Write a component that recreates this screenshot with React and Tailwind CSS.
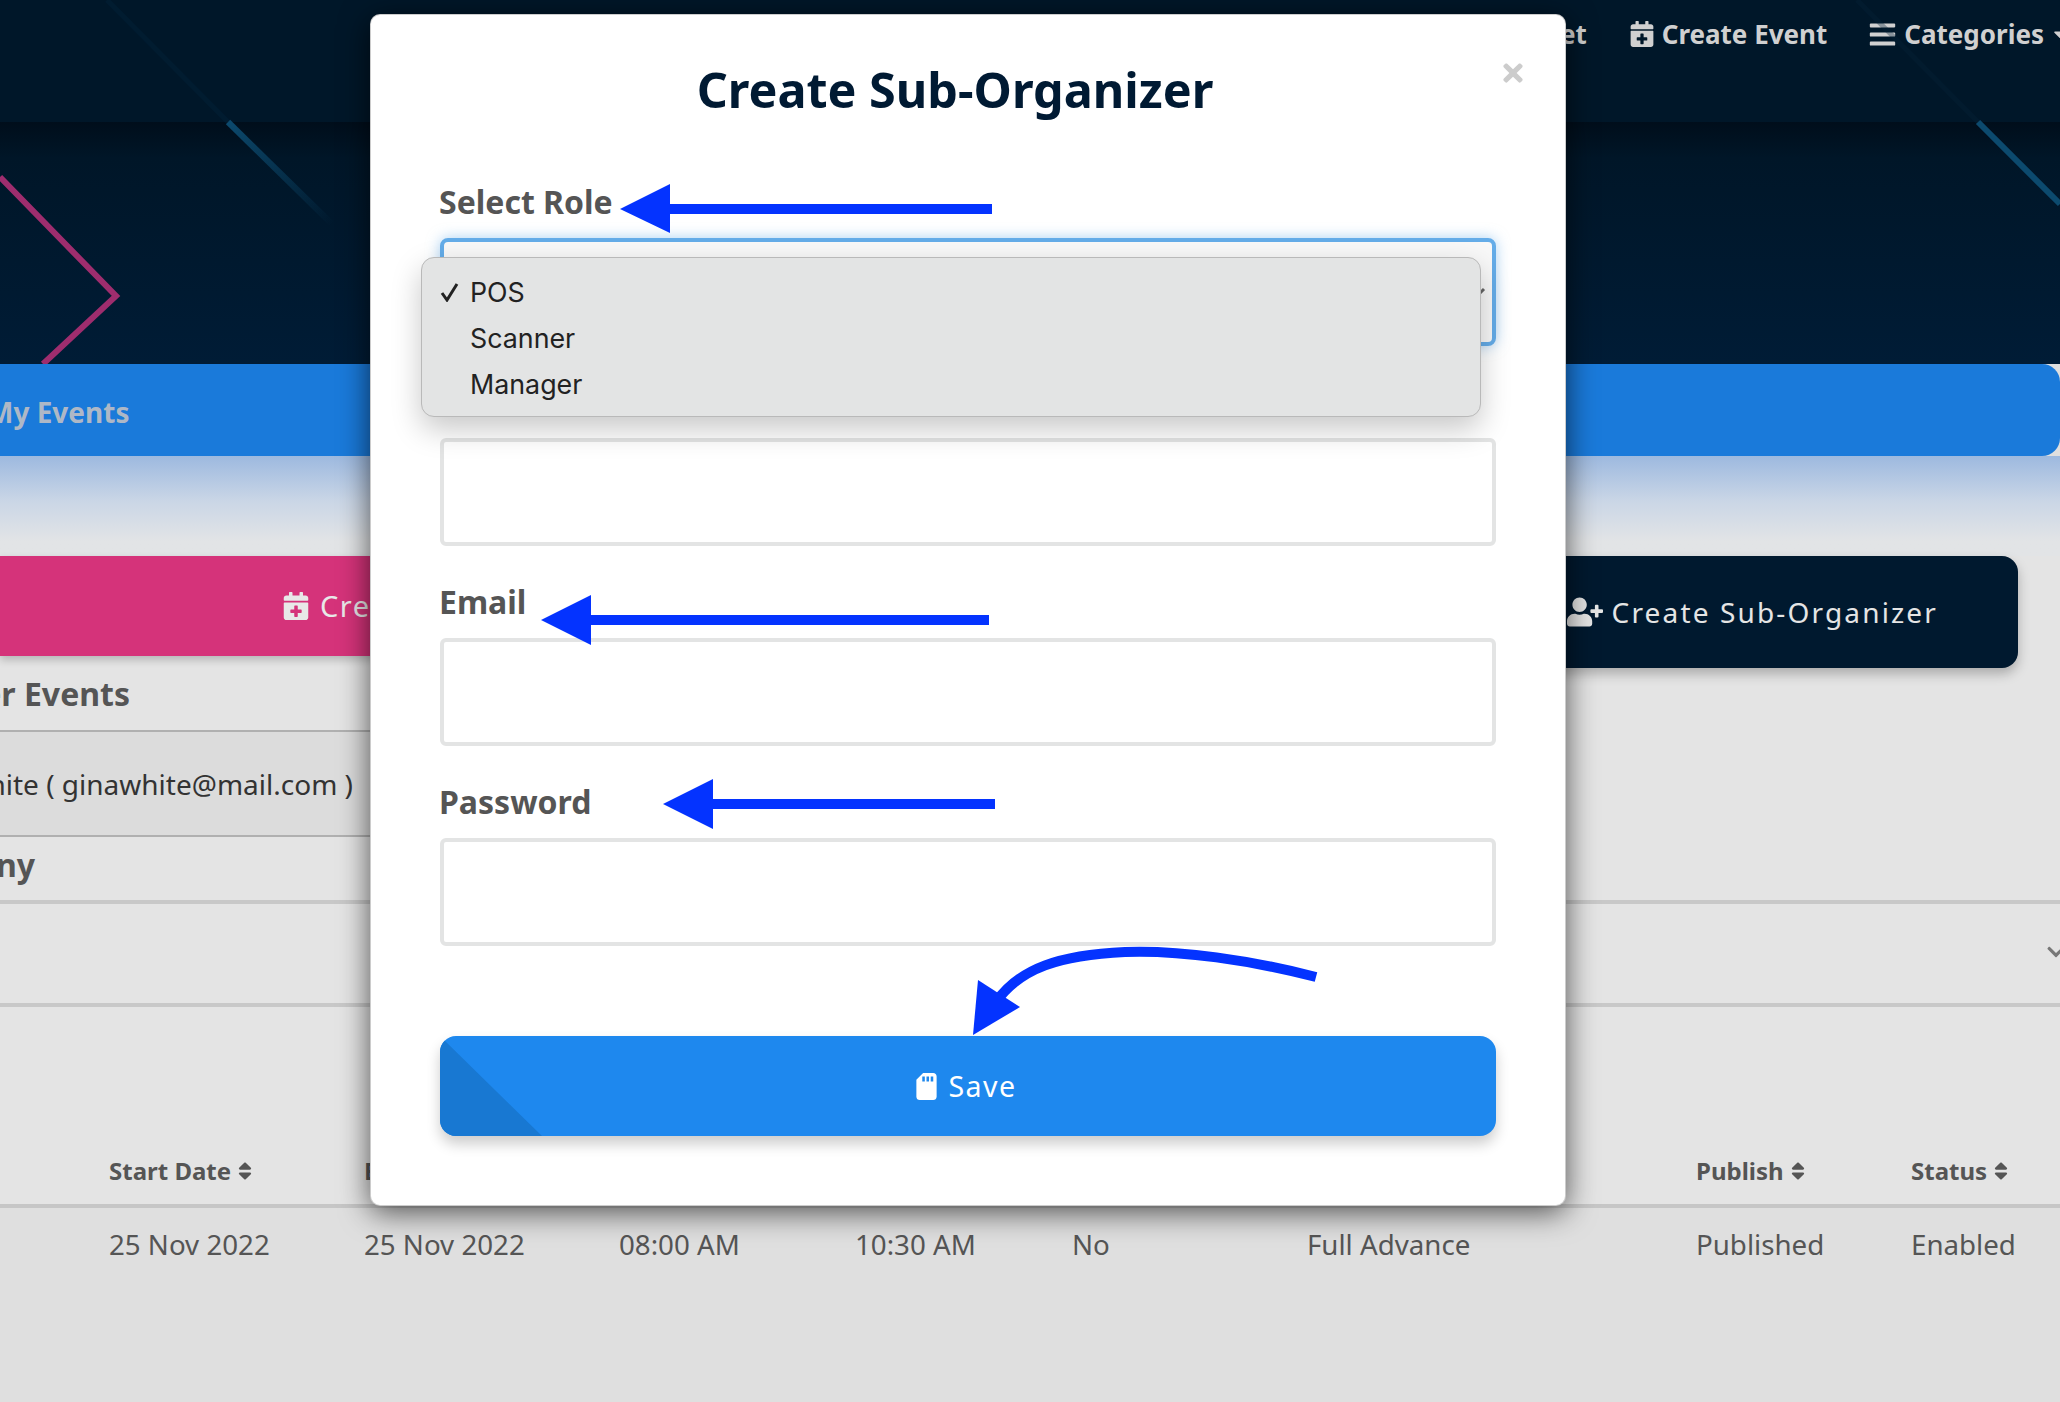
import { FaCalendarPlus, FaBars, FaCaretDown, FaUserPlus, FaTimes, FaSdCard, FaSort, FaChevronDown } from 'react-icons/fa';

const columns = [
  { title: 'Start Date', value: '25 Nov 2022' },
  { title: 'End Date', value: '25 Nov 2022' },
  { title: '', value: '08:00 AM' },
  { title: '', value: '10:30 AM' },
  { title: '', value: 'No' },
  { title: '', value: 'Full Advance' },
  { title: 'Publish', value: 'Published' },
  { title: 'Status', value: 'Enabled' },
];

const roles = ['POS', 'Scanner', 'Manager'];

function Decor() {
  return (
    <svg className="absolute left-0 top-0 pointer-events-none" width="2060" height="364" viewBox="0 0 2060 364" fill="none">
      <defs>
        <linearGradient id="fade1" x1="228" y1="122" x2="332" y2="224" gradientUnits="userSpaceOnUse">
          <stop offset="0" stopColor="#0c4a6e" />
          <stop offset="1" stopColor="#0c4a6e" stopOpacity="0" />
        </linearGradient>
      </defs>
      <path d="M107 0L228 122" stroke="#04263f" strokeWidth="5" opacity="0.35" />
      <path d="M228 122L332 224" stroke="url(#fade1)" strokeWidth="6" />
      <path d="M1857 0L1978 122" stroke="#062338" strokeWidth="5" opacity="0.35" />
      <path d="M1978 122L2060 204" stroke="#0c4a6e" strokeWidth="6" />
      <path d="M0 177L116 296L43 364" stroke="#9e2d6e" strokeWidth="6" />
    </svg>
  );
}

function Arrows() {
  return (
    <svg className="absolute left-0 top-0 pointer-events-none" width="2060" height="1402" viewBox="0 0 2060 1402" fill="none">
      <path d="M620 209L670 184V204H992V214H670V233Z" fill="#0433ff" />
      <path d="M541 620L591 595V615H989V625H591V645Z" fill="#0433ff" />
      <path d="M663 804L713 779V799H995V809H713V829Z" fill="#0433ff" />
      <path d="M1316 977C1250 960 1180 950 1125 952C1060 955 1020 968 996 1002" stroke="#0433ff" strokeWidth="10" />
      <path d="M973 1035L978 980L1020 1007Z" fill="#0433ff" />
    </svg>
  );
}

function Label({ children }) {
  return <div className="h-[64px] pb-[8px] -ml-[1px] flex items-center text-[32px] font-bold text-[#555] leading-none">{children}</div>;
}

function Field({ label }) {
  return (
    <div className="mt-[28px]">
      <Label>{label}</Label>
      <div className="h-[108px] border-4 border-[#e3e4e4] rounded-[6px] bg-white" />
    </div>
  );
}

function RoleSelect() {
  return (
    <div className="relative h-[108px] border-4 border-[#64ace8] rounded-[8px] bg-[#f8f8f8] shadow-[0_0_14px_rgba(100,172,232,0.55)]">
      <svg className="absolute left-[1034px] top-[44px]" width="10" height="10" viewBox="0 0 10 10" fill="none">
        <path d="M1 8L6 3" stroke="#666" strokeWidth="3" />
      </svg>
      <div className="absolute left-[-23px] top-[15px] w-[1060px] h-[160px] bg-[#e3e4e4] border border-[#b9b9b9] rounded-[13px] shadow-[0_12px_30px_rgba(0,0,0,0.22)] pt-[11px] font-['Inter',sans-serif] text-[26.8px] text-[#222]">
        {roles.map((r, i) => (
          <div key={r} className="relative h-[46px] pl-[48px] flex items-center leading-none">
            {i === 0 && (
              <svg className="absolute left-[18px] top-[13px]" width="20" height="20" viewBox="0 0 20 20" fill="none">
                <path d="M2 11L7 18L17 2" stroke="#222" strokeWidth="3" />
              </svg>
            )}
            {r}
          </div>
        ))}
      </div>
    </div>
  );
}

function Modal() {
  return (
    <div className="absolute left-[370px] top-[14px] w-[1196px] h-[1192px] bg-white rounded-[10px] border border-black/20 shadow-[0_6px_30px_rgba(0,0,0,0.65)] pl-[69px] pr-[69px]">
      <FaTimes className="absolute right-[38px] top-[44px] text-[#cccccc] text-[28px]" />
      <h2 className="pt-[41px] pr-[26px] text-center text-[48.5px] leading-[66px] font-bold text-[#001a33]">Create Sub-Organizer</h2>
      <div className="mt-[52px]"><Label>Select Role</Label></div>
      <RoleSelect />
      <div className="mt-[92px] h-[108px] border-4 border-[#e3e4e4] rounded-[6px] bg-white" />
      <Field label="Email" />
      <Field label="Password" />
      <button className="relative overflow-hidden mt-[90px] w-full h-[100px] rounded-[16px] bg-[#1e88ee] shadow-[0_8px_14px_rgba(0,0,0,0.2)] flex items-center justify-center pr-[6px] text-white text-[28.5px] tracking-[1.5px]">
        <svg className="absolute left-0 top-0" width="104" height="100" viewBox="0 0 104 100"><path d="M0 0L4 4L102 100H0Z" fill="#1878d2" /></svg>
        <FaSdCard className="relative mr-[8px] text-[27px]" />
        <span className="relative">Save</span>
      </button>
    </div>
  );
}

export default function App() {
  return (
    <div className="relative w-[2060px] h-[1402px] overflow-hidden bg-[#dfdfdf] font-['Noto_Sans',sans-serif]">
      <header className="h-[122px] bg-[#001729] flex justify-end items-start pt-[14px] text-[26px] font-bold text-[#d0d0d0] leading-[40px] whitespace-nowrap -mr-[10px]">
        <span className="mr-[42px]">et</span>
        <span className="flex items-center mr-[41px]"><FaCalendarPlus className="text-[26px] mr-[7px]" />Create Event</span>
        <span className="flex items-center"><FaBars className="text-[29px] mr-[7px]" />Categories<FaCaretDown className="text-[20px] ml-[6px]" /></span>
      </header>
      <div className="h-[242px] bg-gradient-to-b from-[#000e1b] via-[#001628] via-15% to-[#001c36]" />
      <div className="h-[92px] pt-[3px] bg-[#1a7ada] rounded-r-[18px] flex items-center -ml-[13px] text-[28px] font-bold text-[#aeb8c6] leading-none">My Events</div>
      <div className="h-[100px] bg-gradient-to-b from-[#9db9df] via-[#cad6e6] via-45% to-[#e2e4e6] to-85%" />

      <div className="bg-[#e4e4e4] h-[652px]">
        <div className="flex items-start">
          <div className="w-[800px]">
            <div className="h-[100px] bg-[#d5337a] shadow-[0_4px_8px_rgba(0,0,0,0.2)] flex items-center pl-[282px] text-[29px] tracking-[1.5px] text-[#e8e8e8] whitespace-nowrap">
              <FaCalendarPlus className="text-[28px] mr-[10px]" />Create Event
            </div>
            <div className="h-[76px] border-b-2 border-[#b0b0b0] text-[32px] font-bold text-[#555] whitespace-nowrap">
              <div className="w-[130px] h-full pt-[1px] flex items-center justify-end">Organizer Events</div>
            </div>
            <div className="h-[105px] border-b-2 border-[#b0b0b0] bg-[#dcdcdc] text-[28px] text-[#333] whitespace-nowrap">
              <div className="w-[353px] h-full flex items-center justify-end">White ( ginawhite@mail.com )</div>
            </div>
            <div className="h-[63px] pb-[8px] flex items-center text-[32px] font-bold text-[#555]"><span className="-ml-[4px]">ny</span></div>
          </div>
          <div className="ml-auto mr-[42px] w-[700px] h-[112px] rounded-[16px] bg-[#00192f] shadow-[0_6px_12px_rgba(0,0,0,0.25)] flex items-center justify-end pr-[80px] text-[28px] tracking-[2.15px] text-[#e5e5e5]">
            <FaUserPlus className="text-[36px] mr-[9px]" />Create Sub-Organizer
          </div>
        </div>
        <div className="h-[107px] border-y-4 border-[#c8c8c8] relative">
          <FaChevronDown className="absolute left-[2046px] top-[38px] text-[20px] text-[#777]" />
        </div>
        <div className="grid grid-cols-[255px_255px_236px_217px_235px_389px_215px_149px] pl-[109px] h-[201px] border-b-4 border-[#c6c6c6] items-end pb-[17px] text-[24px] font-bold text-[#555] leading-[32px]">
          {columns.map((c, i) => (
            <div key={i} className="flex items-center whitespace-nowrap">
              {c.title}{c.title && <FaSort className="ml-[3px] text-[22px]" />}
            </div>
          ))}
        </div>
      </div>
      <div className="grid grid-cols-[255px_255px_236px_217px_235px_389px_215px_149px] pl-[109px] pt-[18px] text-[27.7px] text-[#555] leading-[36px] whitespace-nowrap">
        {columns.map((c, i) => <div key={i}>{c.value}</div>)}
      </div>

      <Decor />
      <Modal />
      <Arrows />
    </div>
  );
}
